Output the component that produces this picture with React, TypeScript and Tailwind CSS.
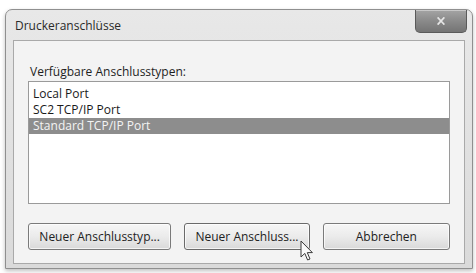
import React from "react";

const ports = ["Local Port", "SC2 TCP/IP Port", "Standard TCP/IP Port"];
const selected = 2;

const buttons = [
  { label: "Neuer Anschlusstyp...", width: "w-[144px]" },
  { label: "Neuer Anschluss...", width: "w-[126px]" },
  { label: "Abbrechen", width: "w-[128px]" },
];

const Cursor = () => (
  <svg className="absolute left-[300px] top-[240px]" width="14" height="22" viewBox="0 0 14 22">
    <path
      d="M1 1 L1 17 L4.8 13.4 L7.6 20 L10 19 L7.3 12.6 L12.4 12.6 Z"
      fill="#fafafa"
      stroke="#3a3a3a"
      strokeWidth="1"
      strokeLinejoin="round"
    />
  </svg>
);

export default function App() {
  return (
    <div
      className="relative w-[476px] h-[273px] overflow-hidden bg-white pt-[9px] pl-[5px] text-[#1e1e1e]"
      style={{ fontFamily: '"Open Sans", "Noto Sans", sans-serif' }}
    >
      <div className="w-[468px] h-[260px] rounded-t-[7px] border border-[#8f8f8f] bg-gradient-to-b from-[#e8e8e8] to-[#dadada] flex flex-col px-[7px] pb-[4px] shadow-[0_2px_4px_rgba(0,0,0,0.25)]">
        <div className="h-[30px] flex items-start justify-between">
          <span className="pt-[8px] pl-[2px] text-[12px] leading-[16px] text-[#2a2a2a]">Druckeranschlüsse</span>
          <div className="-mr-[2px] w-[52px] h-[23px] rounded-b-[5px] border border-t-0 border-[#5a5a5a] bg-gradient-to-b from-[#a4a4a4] via-[#8a8a8a] to-[#747474] flex items-center justify-center shadow-[inset_0_1px_0_rgba(255,255,255,0.4)]">
            <svg width="8" height="8" viewBox="0 0 8 8">
              <path d="M1.2 1 L6.8 7 M6.8 1 L1.2 7" stroke="#e6e6e6" strokeWidth="1.8" strokeLinecap="square" />
            </svg>
          </div>
        </div>

        <div className="flex-1 border border-[#a9a9a9] bg-[#f3f3f3] px-[14px] pt-[23px] flex flex-col">
          <div className="text-[12px] leading-[16px] pl-[2px] mb-[1px]">Verfügbare Anschlusstypen:</div>
          <div className="h-[123px] border border-[#9a9a9a] bg-white pt-[4px]">
            {ports.map((p, i) => (
              <div
                key={p}
                className={`h-[16px] pl-[4px] text-[12px] leading-[16px] ${
                  i === selected ? "bg-[#8d8d8d] text-[#f4f4f4]" : "text-[#1a1a1a]"
                }`}
              >
                {p}
              </div>
            ))}
          </div>

          <div className="mt-[19px] flex gap-[13px]">
            {buttons.map((b, i) => (
              <div
                key={b.label}
                className={`${b.width} h-[27px] rounded-[3px] border ${
                  i === 1 ? "border-[#6a6a6a]" : "border-[#7a7a7a]"
                } bg-gradient-to-b from-[#f6f6f6] via-[#ebebeb] to-[#d9d9d9] shadow-[inset_0_0_0_1px_rgba(255,255,255,0.7)] flex items-center justify-center text-[12px] text-[#222]`}
              >
                {b.label}
              </div>
            ))}
          </div>
        </div>
      </div>
      <Cursor />
    </div>
  );
}
